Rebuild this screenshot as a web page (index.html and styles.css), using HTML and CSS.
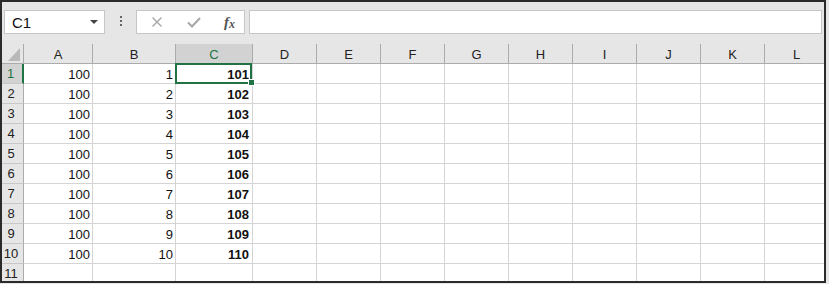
FILE: index.html
```html
<!DOCTYPE html>
<html lang="en">

<head>
    <meta charset="UTF-8">
    <title>Sheet1</title>
    <link rel="stylesheet" href="styles.css">
</head>

<body>
    <div class="window">
        <div class="formula-bar">
            <div class="name-box">
                <span>C1</span>
                <span class="caret"></span>
            </div>
            <div class="dots"><i></i><i></i><i></i></div>
            <div class="fx-buttons">
                <svg width="12" height="10" viewBox="0 0 12 10">
                    <path d="M1.5 0.5 L10.5 9.5 M10.5 0.5 L1.5 9.5" stroke="#a6a6a6" stroke-width="1.4" fill="none" />
                </svg>
                <svg width="14" height="11" viewBox="0 0 14 11">
                    <path d="M1 5.5 L5 9.5 L13 1" stroke="#a6a6a6" stroke-width="2" fill="none" />
                </svg>
                <span class="fx">f<span class="x">x</span></span>
            </div>
            <div class="formula-input"></div>
        </div>
        <div class="sheet" id="sheet"></div>
    </div>

    <script>
        const cols = ['A', 'B', 'C', 'D', 'E', 'F', 'G', 'H', 'I', 'J', 'K', 'L'];
        const sheet = document.getElementById('sheet');

        function cell(cls, text) {
            const div = document.createElement('div');
            div.className = cls;
            div.textContent = text || '';
            sheet.appendChild(div);
        }

        cell('corner');
        cols.forEach(c => cell(c === 'C' ? 'col-head active' : 'col-head', c));

        for (let r = 1; r <= 11; r++) {
            cell(r === 1 ? 'row-head active' : 'row-head', r);
            cols.forEach(c => {
                let text = '';
                if (r <= 10) {
                    if (c === 'A') text = 100;
                    if (c === 'B') text = r;
                    if (c === 'C') text = 100 + r;
                }
                let cls = 'cell';
                if (c === 'C') cls += ' bold';
                if (c === 'C' && r === 1) cls += ' selected';
                cell(cls, text);
            });
        }
    </script>
</body>

</html>
```

FILE: styles.css
```css
body {
    margin: 0;
    padding: 0;
    background-color: #e6e6e6;
    font-family: "Liberation Sans", Arial, sans-serif;
}

.window {
    width: 822px;
    height: 279px;
    border: 2px solid #2b2b2b;
    background-color: #e6e6e6;
    overflow: hidden;
}

.formula-bar {
    display: flex;
    align-items: flex-start;
    height: 42px;
    padding-top: 8px;
    box-sizing: border-box;
}

.name-box {
    display: flex;
    align-items: center;
    justify-content: space-between;
    width: 101px;
    height: 24px;
    margin-left: 2px;
    padding: 0 6px 0 7px;
    box-sizing: border-box;
    background: white;
    border: 1px solid #c6c6c6;
    font-size: 15px;
    color: #111;
}

.caret {
    width: 0;
    height: 0;
    border-left: 4px solid transparent;
    border-right: 4px solid transparent;
    border-top: 4px solid #444;
}

.dots {
    display: flex;
    flex-direction: column;
    gap: 2px;
    width: 31px;
    align-items: center;
    padding-top: 6px;
}

.dots i {
    display: block;
    width: 2px;
    height: 2px;
    background: #666;
}

.fx-buttons {
    display: flex;
    align-items: center;
    width: 109px;
    height: 24px;
    padding-left: 14px;
    box-sizing: border-box;
    background: white;
    border: 1px solid #c6c6c6;
}

.fx-buttons svg:first-child {
    margin-right: 24px;
}

.fx-buttons svg:nth-child(2) {
    margin-right: 23px;
}

.fx {
    font-family: "Liberation Serif", serif;
    font-style: italic;
    font-weight: bold;
    font-size: 15px;
    color: #555;
    line-height: 14px;
}

.fx .x {
    font-size: 12px;
    position: relative;
    top: 1px;
}

.formula-input {
    flex: 1;
    height: 24px;
    margin: 0 2px 0 4px;
    box-sizing: border-box;
    background: white;
    border: 1px solid #c6c6c6;
}

.sheet {
    display: grid;
    grid-template-columns: 22px 69px 83px 77px repeat(9, 64px);
    grid-auto-rows: 20px;
    font-size: 13px;
    color: #111;
}

.sheet > div {
    box-sizing: border-box;
    line-height: 19px;
    white-space: nowrap;
}

.corner {
    position: relative;
    background: #e6e6e6;
    border-right: 1px solid #ababab;
    border-bottom: 1px solid #ababab;
}

.corner::after {
    content: "";
    position: absolute;
    right: 3px;
    bottom: 2px;
    border-left: 12px solid transparent;
    border-bottom: 13px solid #b9b9b9;
}

.col-head {
    text-align: center;
    background: #e6e6e6;
    border-right: 1px solid #ababab;
    border-bottom: 1px solid #ababab;
    padding-top: 1px;
    color: #222;
}

.col-head.active {
    background: #d2d2d2;
    color: #217346;
}

.row-head {
    text-align: center;
    padding-right: 3px;
    background: #e6e6e6;
    border-right: 1px solid #ababab;
    border-bottom: 1px solid #c8c8c8;
    color: #222;
}

.row-head.active {
    background: #d2d2d2;
    color: #217346;
    border-right: 2px solid #217346;
}

.cell {
    background: white;
    text-align: right;
    padding-right: 2px;
    padding-top: 1px;
    border-right: 1px solid #d4d4d4;
    border-bottom: 1px solid #d4d4d4;
}

.bold {
    font-weight: bold;
    padding-right: 3px;
}

.selected {
    position: relative;
}

.selected::after {
    content: "";
    position: absolute;
    top: -1px;
    left: -1px;
    right: 0;
    bottom: -1px;
    border: 2px solid #217346;
}

.selected::before {
    content: "";
    position: absolute;
    right: -3px;
    bottom: -3px;
    width: 5px;
    height: 5px;
    background: #217346;
    border: 1px solid white;
    z-index: 1;
}
```
